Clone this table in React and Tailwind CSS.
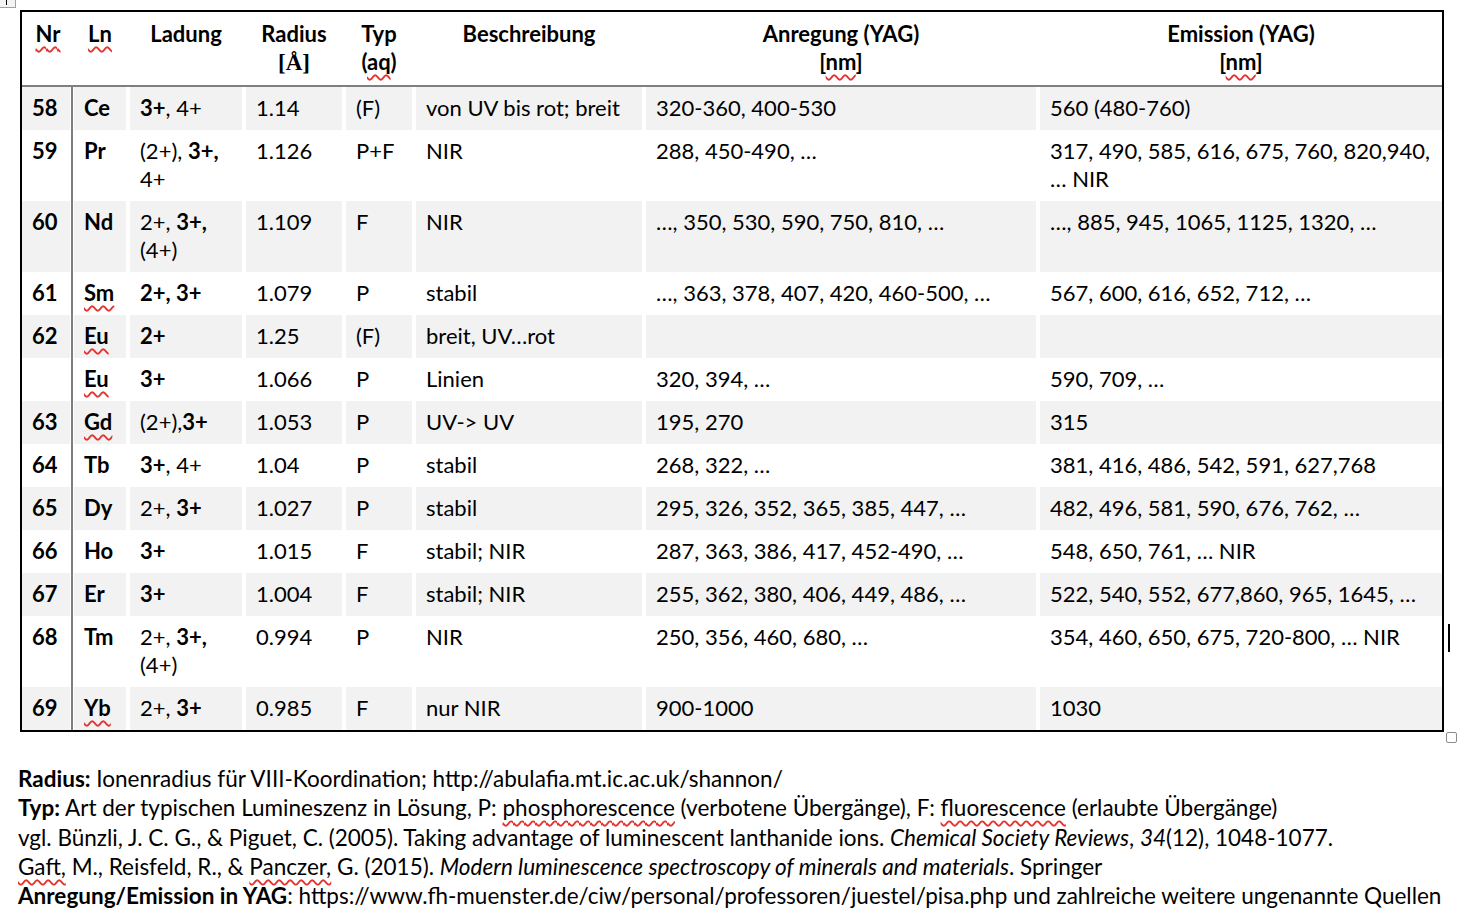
import React from "react";

const Sq = ({ children }) => (
  <span className="underline decoration-wavy decoration-[#e3342f] decoration-[1.5px] underline-offset-[4px]">
    {children}
  </span>
);

const B = ({ children }) => <span className="font-bold">{children}</span>;

const rows = [
  { nr: "58", ln: "Ce", lad: <><B>3+</B>, 4+</>, r: "1.14", typ: "(F)", desc: "von UV bis rot; breit", an: "320-360, 400-530", em: "560 (480-760)" },
  { nr: "59", ln: "Pr", lad: <>(2+), <B>3+,</B><br />4+</>, r: "1.126", typ: "P+F", desc: "NIR", an: "288, 450-490, …", em: <>317, 490, 585, 616, 675, 760, 820,940,<br />… NIR</> },
  { nr: "60", ln: "Nd", lad: <>2+, <B>3+,</B><br />(4+)</>, r: "1.109", typ: "F", desc: "NIR", an: "…, 350, 530, 590, 750, 810, …", em: "…, 885, 945, 1065, 1125, 1320, …" },
  { nr: "61", ln: <Sq>Sm</Sq>, lad: <B>2+, 3+</B>, r: "1.079", typ: "P", desc: "stabil", an: "…, 363, 378, 407, 420, 460-500, …", em: "567, 600, 616, 652, 712, …" },
  { nr: "62", ln: <Sq>Eu</Sq>, lad: <B>2+</B>, r: "1.25", typ: "(F)", desc: "breit, UV…rot", an: "", em: "" },
  { nr: "", ln: <Sq>Eu</Sq>, lad: <B>3+</B>, r: "1.066", typ: "P", desc: "Linien", an: "320, 394, …", em: "590, 709, …" },
  { nr: "63", ln: <Sq>Gd</Sq>, lad: <>(2+),<B>3+</B></>, r: "1.053", typ: "P", desc: "UV-> UV", an: "195, 270", em: "315" },
  { nr: "64", ln: "Tb", lad: <><B>3+</B>, 4+</>, r: "1.04", typ: "P", desc: "stabil", an: "268, 322, …", em: "381, 416, 486, 542, 591, 627,768" },
  { nr: "65", ln: "Dy", lad: <>2+, <B>3+</B></>, r: "1.027", typ: "P", desc: "stabil", an: "295, 326, 352, 365, 385, 447, …", em: "482, 496, 581, 590, 676, 762, …" },
  { nr: "66", ln: "Ho", lad: <B>3+</B>, r: "1.015", typ: "F", desc: "stabil; NIR", an: "287, 363, 386, 417, 452-490, …", em: "548, 650, 761, … NIR" },
  { nr: "67", ln: "Er", lad: <B>3+</B>, r: "1.004", typ: "F", desc: "stabil; NIR", an: "255, 362, 380, 406, 449, 486, …", em: "522, 540, 552, 677,860, 965, 1645, …" },
  { nr: "68", ln: "Tm", lad: <>2+, <B>3+,</B><br />(4+)</>, r: "0.994", typ: "P", desc: "NIR", an: "250, 356, 460, 680, …", em: "354, 460, 650, 675, 720-800, … NIR" },
  { nr: "69", ln: <Sq>Yb</Sq>, lad: <>2+, <B>3+</B></>, r: "0.985", typ: "F", desc: "nur NIR", an: "900-1000", em: "1030" },
];

function Cell({ w, shade, bold, children }) {
  return (
    <div
      className={`${w} shrink-0 pl-[10px] pt-[7px] pb-[8px] whitespace-nowrap ${shade ? "bg-[#f2f2f2]" : ""} ${bold ? "font-bold" : ""}`}
    >
      {children}
    </div>
  );
}

function Row({ row, shade }) {
  return (
    <div className="flex">
      <Cell w="w-[48px]" shade={shade} bold>{row.nr}</Cell>
      <div className="w-[4px] shrink-0 flex justify-center">
        <div className="w-[2px] bg-[#7f7f7f]" />
      </div>
      <div className="flex flex-1 gap-[4px]">
        <Cell w="w-[52px]" shade={shade} bold>{row.ln}</Cell>
        <Cell w="w-[112px]" shade={shade}>{row.lad}</Cell>
        <Cell w="w-[96px]" shade={shade}>{row.r}</Cell>
        <Cell w="w-[66px]" shade={shade}>{row.typ}</Cell>
        <Cell w="w-[226px]" shade={shade}>{row.desc}</Cell>
        <Cell w="w-[390px]" shade={shade}>{row.an}</Cell>
        <Cell w="flex-1" shade={shade}>{row.em}</Cell>
      </div>
    </div>
  );
}

function Head({ w, children }) {
  return <div className={`${w} shrink-0 text-center pt-[8px] pb-[8px] whitespace-nowrap`}>{children}</div>;
}

export default function App() {
  return (
    <div className="relative w-[1470px] h-[922px] bg-white text-black font-[Lato,sans-serif] text-[22px] leading-[28px] overflow-hidden">
      {/* Word table handles / caret */}
      <div className="absolute left-[-4px] top-[-8px] w-[20px] h-[16px] border border-[#a0a0a0] bg-[#f4f4f4] flex justify-center items-end pb-[2px]">
        <div className="w-[1px] h-[6px] bg-black" />
      </div>
      <div className="absolute left-[1446px] top-[732px] w-[11px] h-[11px] border border-[#8c8c8c] rounded-[2px]" />
      <div className="absolute left-[1448px] top-[624px] w-[2px] h-[28px] bg-black" />

      <div className="pl-[20px] pt-[10px]">
        <div className="w-[1424px] border-2 border-black">
          {/* header */}
          <div className="flex font-bold">
            <Head w="w-[52px]"><Sq>Nr</Sq></Head>
            <div className="flex flex-1 gap-[4px]">
              <Head w="w-[52px]"><Sq>Ln</Sq></Head>
              <Head w="w-[112px]">Ladung</Head>
              <Head w="w-[96px]">
                Radius<br />
                <span className="font-['Liberation_Serif',serif] text-[23px]">[Å]</span>
              </Head>
              <Head w="w-[66px]">Typ<br />(<Sq>aq</Sq>)</Head>
              <Head w="w-[226px]">Beschreibung</Head>
              <Head w="w-[390px]">Anregung (YAG)<br />[<Sq>nm</Sq>]</Head>
              <Head w="flex-1">Emission (YAG)<br />[<Sq>nm</Sq>]</Head>
            </div>
          </div>
          <div className="h-[2px] bg-[#7f7f7f]" />
          {rows.map((row, i) => (
            <Row key={i} row={row} shade={i % 2 === 0} />
          ))}
        </div>
      </div>

      {/* notes */}
      <div className="pl-[18px] pt-[32px] text-[22.5px] leading-[29.25px] whitespace-nowrap">
        <div><B>Radius:</B> Ionenradius für VIII-Koordination; http://abulafia.mt.ic.ac.uk/shannon/</div>
        <div>
          <B>Typ:</B> Art der typischen Lumineszenz in Lösung, P: <Sq>phosphorescence</Sq> (verbotene Übergänge), F:{" "}
          <Sq>fluorescence</Sq> (erlaubte Übergänge)
        </div>
        <div>
          vgl. Bünzli, J. C. G., &amp; Piguet, C. (2005). Taking advantage of luminescent lanthanide ions.{" "}
          <i>Chemical Society Reviews</i>, <i>34</i>(12), 1048-1077.
        </div>
        <div>
          <Sq>Gaft,</Sq> M., Reisfeld, R., &amp; <Sq>Panczer,</Sq> G. (2015).{" "}
          <i>Modern luminescence spectroscopy of minerals and materials</i>. Springer
        </div>
        <div>
          <B>Anregung/Emission in YAG</B>: https://www.fh-muenster.de/ciw/personal/professoren/juestel/pisa.php und zahlreiche weitere ungenannte Quellen
        </div>
      </div>
    </div>
  );
}
